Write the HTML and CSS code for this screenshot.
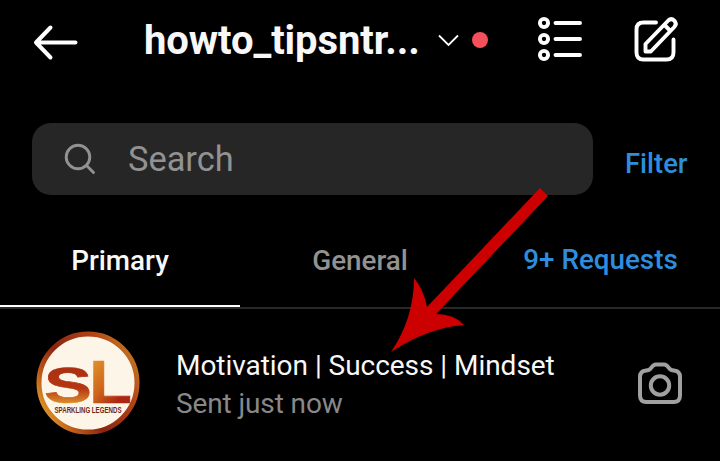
FILE: index.html
```html
<!DOCTYPE html>
<html lang="en">
<head>
<meta charset="utf-8">
<title>Direct messages</title>
<link rel="stylesheet" href="styles.css">
</head>
<body>
<main class="screen">
  <header class="header">
    <svg class="back" viewBox="0 0 48 40" fill="none" stroke="#fff" stroke-width="4" stroke-linecap="round" stroke-linejoin="round"><path d="M18.500 4.500 4 19.500 18.500 34.500M5 19.500H43.500"/></svg>
    <h1 class="title">howto_tipsntr...</h1>
    <svg class="chevron" viewBox="0 0 22 14" fill="none" stroke="#fff" stroke-width="1.800"><path d="M1 1.500 10.500 11 20 1.500"/></svg>
    <span class="dot"></span>
    <svg class="list" viewBox="0 0 46 46" fill="none" stroke="#fff" stroke-width="3.900" stroke-linecap="round"><circle cx="7" cy="7" r="4.100"/><circle cx="7" cy="23" r="4.100"/><circle cx="7" cy="39" r="4.100"/><path d="M18.500 7H43M18.500 23H43M18.500 39H43"/></svg>
    <svg class="compose" viewBox="0 0 48 48" fill="none" stroke="#fff" stroke-width="3.900" stroke-linecap="round" stroke-linejoin="round"><path d="M24 7.500H11.500Q4.500 7.500 4.500 14.500V37.500Q4.500 44.500 11.500 44.500H34.500Q41.500 44.500 41.500 37.500V24.500"/><path d="M13.500 36.500V29L36.300 5.500Q39.300 2.700 42.300 5.700T42.300 12L18.800 36.500ZM32.500 10 38 15.500"/></svg>
  </header>
  <div class="search-row">
    <div class="search">
      <svg class="glass" viewBox="0 0 34 34" fill="none" stroke="#929292" stroke-width="2.900" stroke-linecap="round"><circle cx="15" cy="15" r="11.800"/><path d="M23.800 23.800 30.500 30.500"/></svg>
      <span class="placeholder">Search</span>
    </div>
    <span class="filter">Filter</span>
  </div>
  <nav class="tabs">
    <span class="tab active"><b>Primary</b></span>
    <span class="tab"><b>General</b></span>
    <span class="tab link"><b>9+ Requests</b></span>
  </nav>
  <section class="chat">
    <svg class="avatar" viewBox="0 0 104 104">
      <defs>
        <linearGradient id="ring" x1="1" y1="0.200" x2="0" y2="0.800"><stop offset="0" stop-color="#c77a22"/><stop offset=".25" stop-color="#b04316"/><stop offset=".6" stop-color="#8a2510"/><stop offset=".82" stop-color="#c05a18"/><stop offset="1" stop-color="#e5a62c"/></linearGradient>
        <linearGradient id="mark" x1="0" y1="0" x2="0" y2="1"><stop offset="0" stop-color="#a52d12"/><stop offset=".55" stop-color="#b53612"/><stop offset=".85" stop-color="#e0982e"/></linearGradient>
        <linearGradient id="mark-end" x1="0" y1="0" x2=".8" y2="1"><stop offset="0" stop-color="#e8a832"/><stop offset=".5" stop-color="#cf651b"/><stop offset=".8" stop-color="#ac2711"/></linearGradient>
      </defs>
      <circle cx="52" cy="52" r="49" fill="#fcf5e8" stroke="url(#ring)" stroke-width="5"/>
      <text class="mark" x="8" y="71.500" textLength="48" lengthAdjust="spacingAndGlyphs" fill="url(#mark)" stroke="url(#mark)">S</text>
      <text class="mark mark-tall" x="53" y="71.500" textLength="43" lengthAdjust="spacingAndGlyphs" fill="url(#mark-end)" stroke="url(#mark-end)">L</text>
      <text class="brand" x="18.500" y="81.500" textLength="67" lengthAdjust="spacingAndGlyphs">SPARKLING LEGENDS</text>
    </svg>
    <div class="message">
      <span class="name">Motivation | Success | Mindset</span>
      <span class="status">Sent just now</span>
    </div>
    <svg class="camera" viewBox="0 0 46 44" fill="none" stroke="#a0a0a0" stroke-width="4" stroke-linejoin="round"><path d="M9 9.500Q12.500 9.500 14.500 6.500 16.500 3.500 19 3.500H27Q29.500 3.500 31.500 6.500 33.500 9.500 37 9.500 43 10 43 16V34.500Q43 41 36.500 41H9.500Q3 41 3 34.500V16Q3 10 9 9.500Z"/><circle cx="23" cy="24.500" r="9.200"/></svg>
  </section>
  <svg class="pointer" viewBox="0 0 156 164"><path fill="#cc0000" d="M150 0 158 8 46 126Q64 126 74 137Q37 140 1 164Q24 130 24 90Q34 102 37 119Z"/></svg>
</main>
</body>
</html>
```
FILE: styles.css
```css
* { box-sizing: border-box; }
body { margin: 0; background: #000; }
.screen { position: relative; width: 720px; height: 461px; overflow: hidden; background: #000; color: #f8f8f8; font-family: Roboto, sans-serif; }
svg { display: block; flex: none; overflow: visible; }
.header { display: flex; align-items: center; height: 81px; padding-left: 32px; }
.back { width: 48px; height: 40px; margin-top: 5px; }
.title { width: 294px; margin: 0 0 0 64px; font-size: 40px; font-weight: 700; line-height: 48px; letter-spacing: -.1px; white-space: nowrap; }
.chevron { width: 22px; height: 14px; }
.dot { width: 16px; height: 16px; margin: -1px 0 0 12px; border-radius: 50%; background: #f4505b; }
.list { width: 46px; height: 46px; margin: -3px 0 0 49px; }
.compose { width: 48px; height: 48px; margin: -4px 0 0 49px; }
.search-row { display: flex; height: 152px; padding: 42px 0 0 32px; }
.search { display: flex; align-items: center; width: 561px; height: 72px; padding-left: 31px; border-radius: 19px; background: #262626; color: #929292; }
.glass { width: 34px; height: 34px; }
.placeholder { margin-left: 31px; font-size: 34.400px; line-height: 40px; }
.filter { margin: 25px 0 0 32px; font-size: 27.400px; font-weight: 500; line-height: 32px; color: #2e8ddd; }
.tabs { display: grid; grid-template-columns: repeat(3, 1fr); height: 76px; border-bottom: 2px solid #292929; }
.tab { display: flex; justify-content: center; padding-top: 12px; font-size: 27.800px; line-height: 32px; color: #929292; border-bottom: 2px solid transparent; white-space: nowrap; }
.tab b { font-weight: 500; }
.active { color: #f8f8f8; border-color: #fff; }
.link { padding-top: 11px; padding-left: 1px; color: #2e8ddd; }
.chat { display: flex; align-items: flex-start; padding: 22px 0 0 36px; }
.avatar { width: 104px; height: 104px; }
.mark { font: 700 50px "Liberation Sans", sans-serif; stroke-width: .6px; }
.mark-tall { font-size: 61px; }
.brand { font: 700 8.500px "Liberation Sans", sans-serif; fill: #752613; }
.message { display: flex; flex-direction: column; width: 462px; margin: 16px 0 0 36px; font-size: 28px; line-height: 38px; letter-spacing: -.04px; white-space: nowrap; }
.status { color: #888; letter-spacing: -.12px; }
.camera { width: 46px; height: 44px; margin-top: 30px; margin-left: -1px; }
.pointer { position: absolute; left: 390px; top: 188px; width: 156px; height: 164px; }
```
